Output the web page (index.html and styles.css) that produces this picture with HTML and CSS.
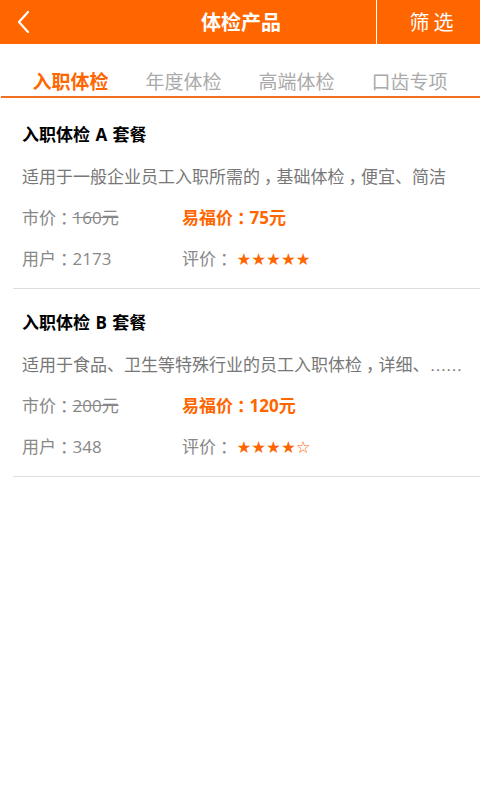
FILE: index.html
```html
<!DOCTYPE html>
<html lang="zh-CN">
<head>
<meta charset="utf-8">
<title>体检产品</title>
<link rel="stylesheet" href="styles.css">
</head>
<body>
<header class="topbar">
  <div class="back">
    <svg width="14" height="24" viewBox="0 0 14 24"><polyline points="12,2 3,12 12,22" fill="none" stroke="#fff" stroke-width="2.2" stroke-linecap="round" stroke-linejoin="round"/></svg>
  </div>
  <h1 class="title">体检产品</h1>
  <div class="filter">筛选</div>
</header>
<nav class="tabs">
  <div class="tab active">入职体检</div>
  <div class="tab">年度体检</div>
  <div class="tab">高端体检</div>
  <div class="tab">口齿专项</div>
</nav>
<main class="list">
  <section class="card">
    <div class="row name">入职体检 A 套餐</div>
    <div class="row desc">适用于一般企业员工入职所需的<span class="p">，</span>基础体检<span class="p">，</span>便宜、简洁</div>
    <div class="row cols">
      <span class="col muted">市价<span class="p">：</span><s>160元</s></span>
      <span class="col price">易福价<span class="p">：</span>75元</span>
    </div>
    <div class="row cols">
      <span class="col muted">用户<span class="p">：</span>2173</span>
      <span class="col muted">评价<span class="p">：</span><span class="stars">★★★★★</span></span>
    </div>
  </section>
  <section class="card">
    <div class="row name">入职体检 B 套餐</div>
    <div class="row desc">适用于食品、卫生等特殊行业的员工入职体检<span class="p">，</span>详细、<span class="dots">……</span></div>
    <div class="row cols">
      <span class="col muted">市价<span class="p">：</span><s>200元</s></span>
      <span class="col price">易福价<span class="p">：</span>120元</span>
    </div>
    <div class="row cols">
      <span class="col muted">用户<span class="p">：</span>348</span>
      <span class="col muted">评价<span class="p">：</span><span class="stars">★★★★☆</span></span>
    </div>
  </section>
</main>
</body>
</html>
```
FILE: styles.css
```css
* { box-sizing: border-box; }
html, body { margin: 0; padding: 0; background: #fff; }
body {
  width: 480px;
  height: 800px;
  font-family: "Noto Sans CJK SC", "Noto Sans", sans-serif;
}
.topbar {
  height: 44px;
  background: #ff6600;
  display: flex;
  align-items: stretch;
  color: #fff;
}
.back {
  width: 106px;
  display: flex;
  align-items: center;
  padding-left: 16px;
}
.back svg { display: block; }
.title {
  flex: 1;
  margin: 0;
  text-align: center;
  font-size: 20px;
  font-weight: bold;
  line-height: 44px;
}
.filter {
  width: 104px;
  border-left: 1px solid #fff;
  text-align: center;
  font-size: 20px;
  line-height: 44px;
  letter-spacing: 4px;
  padding-left: 10px;
}
.tabs {
  display: flex;
  padding: 24px 14px 2px 13px;
  border-bottom: 2px solid #f07022;
  margin-left: 1px;
}
.tab {
  flex: 1;
  text-align: center;
  font-size: 19px;
  line-height: 26px;
  color: #aaa;
}
.tab.active {
  color: #ff6600;
  font-weight: bold;
}
.list { margin-top: 3px; }
.card {
  margin-left: 13px;
  padding: 13px 0 10px 9px;
  border-bottom: 1px solid #ddd;
}
.row {
  height: 41px;
  line-height: 41px;
  white-space: nowrap;
  overflow: hidden;
  font-family: "Open Sans", "Noto Sans CJK SC", sans-serif;
}
.p {
  font-family: "Noto Sans CJK SC", sans-serif;
  font-feature-settings: "halt";
  padding: 0 4px;
}
.name {
  font-size: 17px;
  font-weight: bold;
  color: #000;
  word-spacing: 1px;
}
.desc {
  font-size: 17px;
  color: #777;
}
.dots {
  font-family: "Liberation Sans", sans-serif;
  letter-spacing: -1px;
}
.cols { display: flex; font-size: 17px; }
.col:first-child { width: 160px; }
.muted { color: #888; }
.muted s { color: #888; }
.price { color: #ff6600; font-weight: bold; }
.stars {
  color: #ff6600;
  font-family: "DejaVu Sans", sans-serif;
  font-size: 16.5px;
  margin-left: 4px;
}
```
